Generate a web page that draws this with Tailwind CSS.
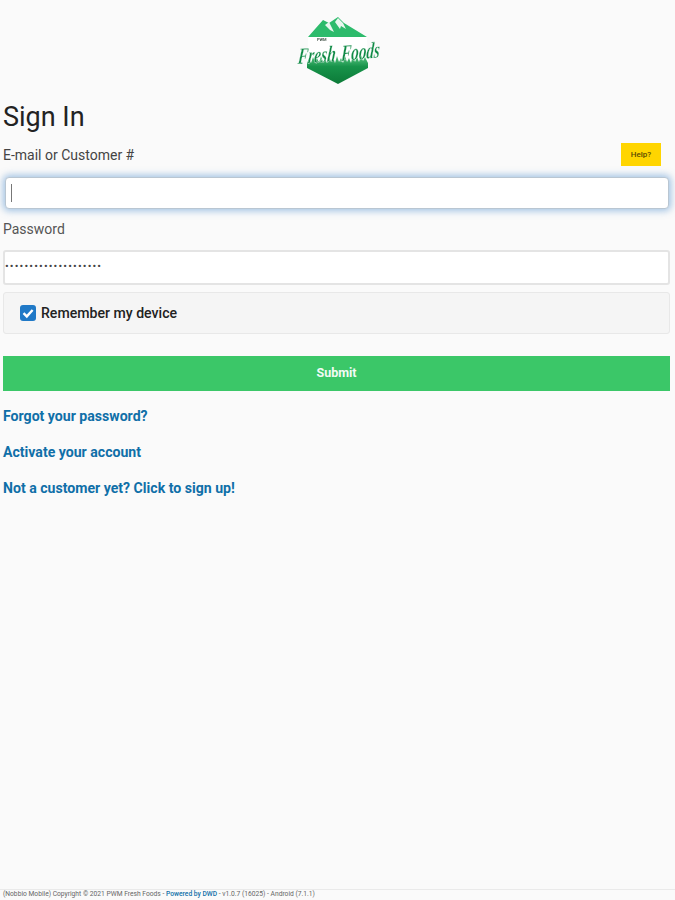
<!DOCTYPE html>
<html>
<head>
<meta charset="utf-8">
<script src="https://cdn.jsdelivr.net/npm/@tailwindcss/browser@4"></script>
</head>
<body class="m-0 bg-[#fafafa]">
<div class="flex h-[900px] w-[675px] flex-col overflow-hidden bg-[#fafafa] font-['Roboto',sans-serif] text-[#333]">
  <main class="flex-1 pr-[5px] pl-[3px]">
    <div class="flex h-[98px] justify-center pt-[14px]">
      <svg width="86" height="72" viewBox="0 0 86 72" class="ml-[5px] overflow-visible blur-[0.6px]">
        <defs>
          <linearGradient id="t" x1="0" y1="0" x2="0" y2="1"><stop offset="0" stop-color="#5cc884"/><stop offset="0.4" stop-color="#17934a"/><stop offset="1" stop-color="#0c7a38"/></linearGradient>
        </defs>
        <polygon points="12,23 27,6 33,9 42,3 48,9 71,23" fill="#2dbb6c"/>
        <polygon points="29,11 33,8 36,14 38,18 34,16" fill="#e9f7ef"/>
        <polygon points="39,8 42,4 47,9 50,15 45,12 44,15" fill="#e9f7ef"/>
        <polygon points="12,23 71,23 72,54 42,70 11,54" fill="#fff"/>
        <polygon points="11,54 11,49 13,45 15,49 17,43 19,48 21,44 23,49 25,42 27,48 29,45 31,49 33,42 35,48 37,44 39,49 41,42 43,48 45,44 47,49 49,42 51,48 53,44 55,49 57,41 59,48 61,43 63,48 65,41 67,47 69,43 72,49 72,54 42,70" fill="url(#t)"/>
        <text x="10" y="50" font-family="Liberation Serif, serif" font-style="italic" font-weight="700" font-size="23" fill="#0f8a45" stroke="#fff" stroke-width="0.3" textLength="38" lengthAdjust="spacingAndGlyphs" transform="rotate(-4 2 50) skewX(-10)">Fresh</text>
        <text x="53" y="47" font-family="Liberation Serif, serif" font-style="italic" font-weight="700" font-size="23" fill="#0f8a45" stroke="#fff" stroke-width="0.3" textLength="39" lengthAdjust="spacingAndGlyphs" transform="rotate(-6 48 47) skewX(-10)">Foods</text>
        <text x="21" y="27" font-family="Roboto, sans-serif" font-weight="700" font-size="4" fill="#4a5a50">PWM</text>
      </svg>
    </div>
    <h1 class="mt-[2px] text-[27px] leading-[34px] font-normal text-[#222]">Sign In</h1>
    <div class="mt-[9px] flex h-[23px] items-center justify-between pr-[9px]">
      <label class="text-[14px] leading-[20px] text-[#444]">E-mail or Customer #</label>
      <button class="flex h-[23px] w-[40px] items-center justify-center bg-[#ffd500] text-[8px] font-medium text-[#5a4a00]">Help?</button>
    </div>
    <div class="mt-[11px] mr-[1px] ml-[2px] flex h-[32px] items-center rounded-[4px] border border-[#b9c6d2] bg-white pl-[5px] shadow-[0_0_7px_2px_rgba(90,150,210,0.55)]">
      <span class="h-[18px] w-[1px] bg-[#777]"></span>
    </div>
    <label class="mt-[10px] block text-[14px] leading-[20px] text-[#555]">Password</label>
    <div class="mt-[11px] flex h-[35px] items-center rounded-[3px] border-2 border-[#e4e4e4] bg-white text-[11px] tracking-[1.15px] text-[#444]">••••••••••••••••••••</div>
    <div class="mt-[7px] flex h-[42px] items-center rounded-[3px] border border-[#e8e8e8] bg-[#f5f5f5] pl-[16px]">
      <span class="flex h-[16px] w-[16px] items-center justify-center rounded-[3px] bg-[#2079c7]">
        <svg width="14" height="14" viewBox="0 0 14 14"><path d="M2.5 7.2 L5.8 10.4 L11.6 4" fill="none" stroke="#fff" stroke-width="2.4"/></svg>
      </span>
      <span class="ml-[5px] pt-[1px] text-[14.1px] font-medium text-[#222]">Remember my device</span>
    </div>
    <button class="mt-[22px] flex h-[35px] w-full items-center justify-center bg-[#3bc768] text-[12.5px] font-bold text-[#f2fbf5]">Submit</button>
    <nav class="mt-[15px] flex flex-col gap-[16px] text-[14.1px] leading-[20px] font-bold text-[#0f6fa8]">
      <a>Forgot your password?</a>
      <a>Activate your account</a>
      <a>Not a customer yet? Click to sign up!</a>
    </nav>
  </main>
  <footer class="flex h-[11px] items-start border-t border-[#eaeaea] pl-[3px] text-[6.7px] leading-[8px] whitespace-nowrap text-[#666]">
    <span>(Nobbio Mobile) Copyright © 2021 PWM Fresh Foods -&nbsp;</span><span class="font-medium text-[#0f6fa8]">Powered by DWD</span><span>&nbsp;- v1.0.7 (16025) - Android (7.1.1)</span>
  </footer>
</div>
</body>
</html>
